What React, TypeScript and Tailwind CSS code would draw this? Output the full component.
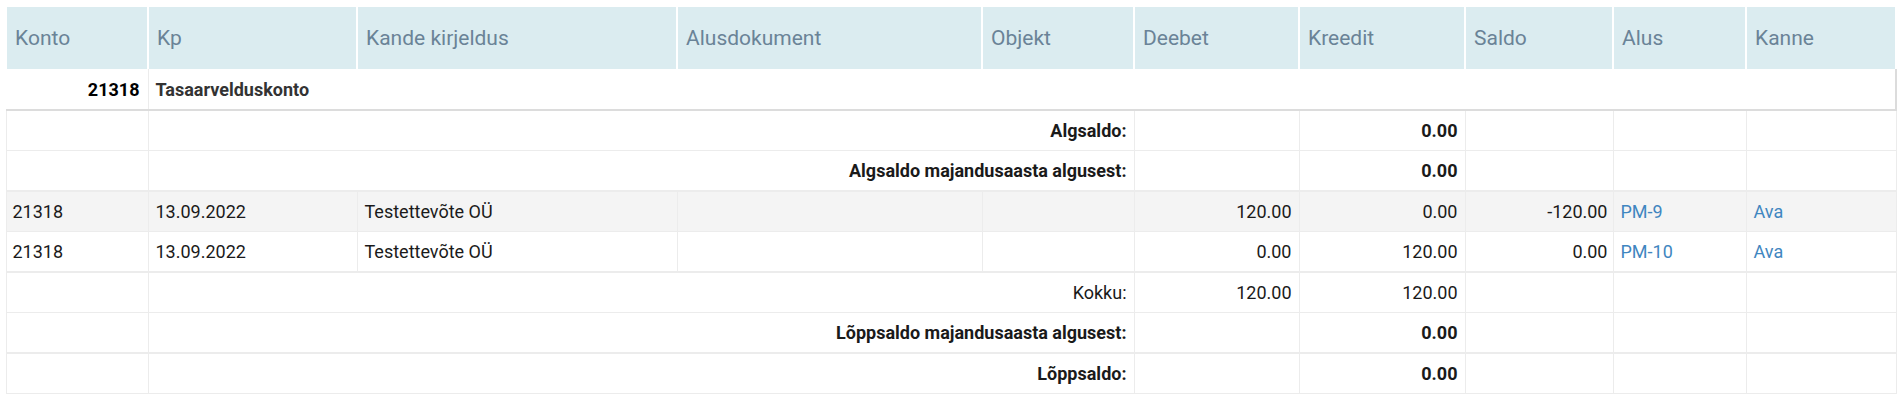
import React from "react";

const widths = [142, 209, 320, 305, 152, 165, 166, 148, 133, 150];
const heads = ["Konto", "Kp", "Kande kirjeldus", "Alusdokument", "Objekt", "Deebet", "Kreedit", "Saldo", "Alus", "Kanne"];

const cell = "border-r border-l border-[#ececec] px-[7px] align-middle";

function SummaryRow({ label, deebet, kreedit, bold, thick }: { label: string; deebet?: string; kreedit?: string; bold?: boolean; thick?: boolean }) {
  const b = thick ? "border-b-2 h-[41px]" : "border-b h-[40px]";
  return (
    <tr className={`${thick ? "border-b-2" : "border-b"} border-[#ececec]`}>
      <td className={`${cell} ${b}`}></td>
      <td colSpan={4} className={`${cell} ${b} text-right ${bold ? "font-bold" : ""}`}>{label}</td>
      <td className={`${cell} ${b} text-right`}>{deebet ?? ""}</td>
      <td className={`${cell} ${b} text-right ${bold ? "font-bold" : ""}`}>{kreedit ?? ""}</td>
      <td className={`${cell} ${b}`}></td>
      <td className={`${cell} ${b}`}></td>
      <td className={`${cell} ${b}`}></td>
    </tr>
  );
}

function DataRow({ d, k, s, alus, grey, thick }: { d: string; k: string; s: string; alus: string; grey?: boolean; thick?: boolean }) {
  const b = thick ? "border-b-2 h-[41px]" : "border-b h-[40px]";
  const c = `${cell} ${b}`;
  return (
    <tr className={`${thick ? "border-b-2" : "border-b"} border-[#ececec] ${grey ? "bg-[#f4f4f4]" : ""}`}>
      <td className={`${c} pl-[6px]`}>21318</td>
      <td className={c}>13.09.2022</td>
      <td className={c}>Testettevõte OÜ</td>
      <td className={c}></td>
      <td className={c}></td>
      <td className={`${c} text-right`}>{d}</td>
      <td className={`${c} text-right`}>{k}</td>
      <td className={`${c} text-right pr-[5px]`}>{s}</td>
      <td className={`${c} text-[#3f86c0]`}>{alus}</td>
      <td className={`${c} text-[#3f86c0]`}>Ava</td>
    </tr>
  );
}

export default function App() {
  return (
    <div className="bg-white w-[1901px] h-[394px] overflow-hidden pl-[5px] pt-[7px]" style={{ fontFamily: "Roboto, 'Liberation Sans', sans-serif" }}>
      <table className="table-fixed border-collapse w-[1890px] text-[18px] text-[#1a1a1a] leading-[21px]">
        <colgroup>
          {widths.map((w, i) => (
            <col key={i} style={{ width: w }} />
          ))}
        </colgroup>
        <thead>
          <tr className="bg-[#dbecf0]">
            {heads.map((h, i) => (
              <th key={i} className="h-[62px] text-left font-normal text-[21px] text-[#6a8397] pl-[8px] border-r-2 border-l-2 border-white align-middle">
                {h}
              </th>
            ))}
          </tr>
        </thead>
        <tbody>
          <tr className="border-b-2 border-[#dcdcdc]">
            <td className="border-r border-[#ececec] border-b-2 border-b-[#dcdcdc] h-[41px] px-[8px] text-right font-bold text-black">21318</td>
            <td colSpan={9} className="border-r-2 border-r-[#dcdcdc] border-b-2 border-b-[#dcdcdc] h-[41px] px-[7px] font-bold text-[#333]">Tasaarvelduskonto</td>
          </tr>
          <SummaryRow label="Algsaldo:" kreedit="0.00" bold />
          <SummaryRow label="Algsaldo majandusaasta algusest:" kreedit="0.00" bold thick />
          <DataRow d="120.00" k="0.00" s="-120.00" alus="PM-9" grey />
          <DataRow d="0.00" k="120.00" s="0.00" alus="PM-10" thick />
          <SummaryRow label="Kokku:" deebet="120.00" kreedit="120.00" />
          <SummaryRow label="Lõppsaldo majandusaasta algusest:" kreedit="0.00" bold thick />
          <SummaryRow label="Lõppsaldo:" kreedit="0.00" bold />
        </tbody>
      </table>
    </div>
  );
}
